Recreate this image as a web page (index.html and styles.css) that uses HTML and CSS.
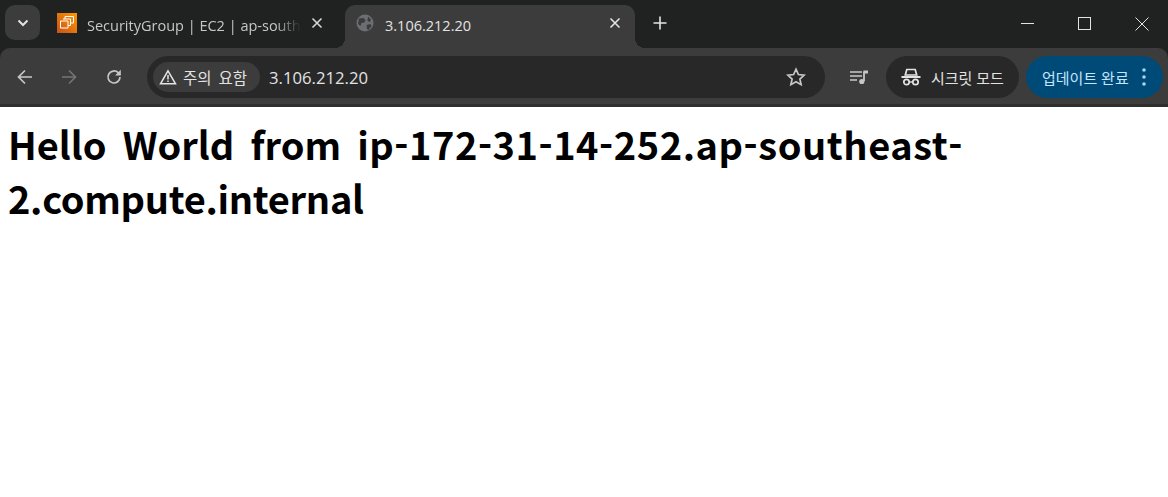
FILE: index.html
```html
<!DOCTYPE html>
<html lang="ko">
<head>
  <meta charset="UTF-8" />
  <title>3.106.212.20</title>
  <link rel="stylesheet" href="styles.css">
</head>
<body>

<header class="browser">
  <div class="tabstrip">
    <button class="tab-search">
      <svg width="12" height="12" viewBox="0 0 12 12"><path d="M1.500 3.500 6 8l4.500-4.500" fill="none" stroke="#e3e3e3" stroke-width="2"/></svg>
    </button>
    <div class="tab">
      <svg class="favicon" width="20" height="20" viewBox="0 0 20 20">
        <defs>
          <linearGradient id="aws" x1="0" y1="1" x2="1" y2="0">
            <stop offset="0" stop-color="#c8511b"/>
            <stop offset="1" stop-color="#f90"/>
          </linearGradient>
        </defs>
        <rect width="20" height="20" fill="url(#aws)"/>
        <path d="M8 6V3.500h8.500V10H13.500M3.500 8H11V15H3.500ZM6 6H13.500V12.500H11" fill="none" stroke="#fff" stroke-width="1"/>
      </svg>
      <span class="tab-title">SecurityGroup | EC2 | ap-south</span>
      <svg class="tab-close" width="12" height="12" viewBox="0 0 12 12"><path d="M1.500 1.500l9 9M10.500 1.500l-9 9" stroke="#d6d6d6" stroke-width="1.600"/></svg>
    </div>
    <div class="tab active">
      <svg class="favicon" width="18" height="18" viewBox="0 0 18 18">
        <circle cx="9" cy="9" r="8.500" fill="#6b6e72"/>
        <path d="M3 4.500 7.500 4l2 2-1 2.500-3 .5-1 3L2 10ZM12 2.500l3 3-1 2.500-2.500-1ZM10.500 11l4-1 1 2-3 4-1.500-1Z" fill="#3c3c3c"/>
      </svg>
      <span class="tab-title">3.106.212.20</span>
      <svg class="tab-close" width="12" height="12" viewBox="0 0 12 12"><path d="M1.500 1.500l9 9M10.500 1.500l-9 9" stroke="#e3e3e3" stroke-width="1.600"/></svg>
    </div>
    <button class="new-tab">
      <svg width="14" height="14" viewBox="0 0 14 14"><path d="M7 .5v13M.5 7h13" stroke="#e3e3e3" stroke-width="1.600"/></svg>
    </button>
    <div class="window-controls">
      <svg width="13" height="13" viewBox="0 0 13 13"><path d="M0 6.500h13" stroke="#e3e3e3"/></svg>
      <svg width="13" height="13" viewBox="0 0 13 13"><rect x=".5" y=".5" width="12" height="12" fill="none" stroke="#e3e3e3"/></svg>
      <svg width="14" height="14" viewBox="0 0 14 14"><path d="M.5.500l13 13M13.500.500l-13 13" stroke="#e3e3e3"/></svg>
    </div>
  </div>

  <div class="toolbar">
    <button class="nav-btn">
      <svg width="18" height="18" viewBox="0 0 18 18"><path d="M16 9H3M9 2.500 2.500 9 9 15.500" fill="none" stroke="#c7c7c7" stroke-width="1.700"/></svg>
    </button>
    <button class="nav-btn">
      <svg width="18" height="18" viewBox="0 0 18 18"><path d="M2 9H15M9 2.500 15.500 9 9 15.500" fill="none" stroke="#747474" stroke-width="1.700"/></svg>
    </button>
    <button class="nav-btn">
      <svg width="18" height="18" viewBox="0 0 18 18"><path d="M15 9a6 6 0 1 1-1.800-4.300L15 6.500" fill="none" stroke="#c7c7c7" stroke-width="1.700"/><path d="M15.800 1.800V7.500H10.100Z" fill="#c7c7c7"/></svg>
    </button>
    <div class="omnibox">
      <div class="security-chip">
        <svg width="18" height="16" viewBox="0 0 18 16"><path d="M9 1.800 16.500 14.800H1.500Z" fill="none" stroke="#e3e3e3" stroke-width="1.500"/><path d="M9 6v4.500M9 11.500v1.500" stroke="#e3e3e3" stroke-width="1.500"/></svg>
        <span>주의 요함</span>
      </div>
      <span class="url">3.106.212.20</span>
      <svg class="star" width="20" height="20" viewBox="0 0 20 20"><path d="M10 2.200l2.400 5.300 5.800.6-4.300 3.900 1.200 5.700-5.100-2.900-5.100 2.900 1.200-5.700L1.800 8.100l5.800-.6Z" fill="none" stroke="#c7c7c7" stroke-width="1.700"/></svg>
    </div>
    <svg class="media" width="20" height="16" viewBox="0 0 20 16"><path d="M1 3h12M1 7h12M1 11h7" stroke="#c7c7c7" stroke-width="1.700"/><path d="M15 2.500v9.500" stroke="#c7c7c7" stroke-width="1.800"/><path d="M14.500 1.500h4.500v3h-4.500Z" fill="#c7c7c7"/><circle cx="12.800" cy="12.500" r="2.600" fill="#c7c7c7"/></svg>
    <div class="incognito">
      <svg width="20" height="18" viewBox="0 0 20 18"><path d="M5.800 1.500h8.400l1.500 5.500H4.300Z" fill="none" stroke="#e3e3e3" stroke-width="1.700"/><path d="M.5 9h19" stroke="#e3e3e3" stroke-width="2"/><circle cx="5.500" cy="14" r="2.700" fill="none" stroke="#e3e3e3" stroke-width="1.700"/><circle cx="14.500" cy="14" r="2.700" fill="none" stroke="#e3e3e3" stroke-width="1.700"/><path d="M8.300 14h3.400" stroke="#e3e3e3" stroke-width="1.400"/></svg>
      <span>시크릿 모드</span>
    </div>
    <div class="update">
      <span>업데이트 완료</span>
      <svg width="4" height="18" viewBox="0 0 4 18"><circle cx="2" cy="2" r="1.800" fill="#a8d4f5"/><circle cx="2" cy="9" r="1.800" fill="#a8d4f5"/><circle cx="2" cy="16" r="1.800" fill="#a8d4f5"/></svg>
    </div>
  </div>
</header>

<main>
  <h1>Hello World from <span class="host-head">ip-172-31-14-252.ap-southeast-</span><span class="host-tail">2.compute.internal</span></h1>
</main>

</body>
</html>
```

FILE: styles.css
```css
html, body {
  margin: 0;
  padding: 0;
  background: #fff;
}
body {
  font-family: "Noto Sans CJK KR", "Noto Sans", sans-serif;
  overflow: hidden;
}
button {
  background: none;
  border: none;
  padding: 0;
  display: flex;
  align-items: center;
  justify-content: center;
}

.browser {
  font-family: "Open Sans", "Noto Sans CJK KR", sans-serif;
  background: #202222;
}

.tabstrip {
  height: 48px;
  display: flex;
  align-items: flex-start;
  box-sizing: border-box;
  padding: 5px 0 0 5px;
}
.tab-search {
  width: 35px;
  height: 35px;
  margin-right: 8px;
  background: #3c3c3c;
  border-radius: 10px;
}
.tab {
  width: 289px;
  height: 43px;
  margin-right: 8px;
  display: flex;
  align-items: flex-start;
  box-sizing: border-box;
  padding: 8px 14px 0 9px;
  color: #c7c7c7;
  font-size: 14.500px;
  position: relative;
}
.tab.active {
  width: 290px;
  margin-right: 0;
  background: #3c3c3c;
  border-radius: 10px 10px 0 0;
  color: #e3e3e3;
  padding-left: 11px;
}
.tab.active .favicon {
  margin-top: 1px;
  margin-right: 1px;
}
.tab.active::before,
.tab.active::after {
  content: "";
  position: absolute;
  bottom: 0;
  width: 10px;
  height: 10px;
}
.tab.active::before {
  left: -10px;
  background: radial-gradient(circle at 0 0, transparent 10px, #3c3c3c 10px);
}
.tab.active::after {
  right: -10px;
  background: radial-gradient(circle at 100% 0, transparent 10px, #3c3c3c 10px);
}
.favicon {
  flex: none;
}
.tab-title {
  margin-left: 10px;
  line-height: 20px;
  margin-top: 3px;
  white-space: nowrap;
}
.tab:not(.active) .tab-title {
  -webkit-mask-image: linear-gradient(to right, #000 88%, transparent);
  mask-image: linear-gradient(to right, #000 88%, transparent);
}
.tab-close {
  flex: none;
  margin: 4px 0 0 auto;
}
.new-tab {
  width: 14px;
  height: 14px;
  margin: 11px 0 0 18px;
}
.window-controls {
  margin-left: auto;
  display: flex;
  align-items: center;
  gap: 44px;
  height: 37px;
  padding-right: 19px;
}

.toolbar {
  height: 54px;
  padding: 2px 5px 0 16px;
  background: #3c3c3c;
  border-bottom: 3px solid #2e2e2e;
  border-radius: 10px 10px 0 0;
  display: flex;
  align-items: center;
}
.nav-btn {
  width: 18px;
  height: 18px;
  margin-right: 26px;
}
.nav-btn:nth-child(2) {
  margin-right: 27px;
}
.nav-btn:nth-child(3) {
  margin-right: 24px;
}
.omnibox {
  width: 678px;
  height: 42px;
  background: #282828;
  border-radius: 21px;
  box-sizing: border-box;
  padding: 0 19px 0 6px;
  display: flex;
  align-items: center;
}
.security-chip {
  width: 107px;
  height: 30px;
  background: #3c3c3c;
  border-radius: 15px;
  box-sizing: border-box;
  display: flex;
  align-items: center;
  gap: 6px;
  padding-left: 6px;
  color: #e3e3e3;
  font-size: 15.500px;
  word-spacing: 3px;
  white-space: nowrap;
  flex: none;
}
.url {
  color: #e3e3e3;
  font-size: 16.700px;
  margin-left: 9px;
}
.star {
  margin-left: auto;
}
.media {
  margin-left: 24px;
  flex: none;
}
.incognito {
  width: 133px;
  height: 42px;
  margin-left: 17px;
  background: #282828;
  border-radius: 21px;
  box-sizing: border-box;
  padding-left: 15px;
  display: flex;
  align-items: center;
  gap: 10px;
  color: #e3e3e3;
  font-size: 15px;
}
.update {
  width: 137px;
  height: 42px;
  margin-left: 7px;
  background: #004a77;
  border-radius: 21px;
  box-sizing: border-box;
  padding: 0 17px 0 16px;
  display: flex;
  align-items: center;
  justify-content: space-between;
  color: #c2e7ff;
  font-size: 15px;
}

main {
  padding: 0 8px;
}
h1 {
  margin: 10px 0 0;
  font-size: 38px;
  line-height: 54px;
  font-weight: 700;
  word-spacing: 5.500px;
  color: #000;
  width: 1000px;
}
.host-head {
  letter-spacing: .55px;
}
.host-tail {
  letter-spacing: -.3px;
}
```
